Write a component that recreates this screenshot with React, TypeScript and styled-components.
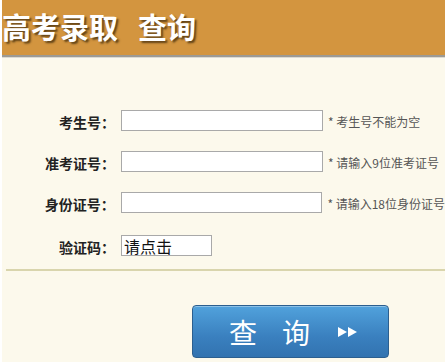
import React from "react";
import styled, { createGlobalStyle } from "styled-components";

const GlobalStyle = createGlobalStyle`
  html, body {
    margin: 0;
    padding: 0;
    background: #ffffff;
    overflow: hidden;
  }
  body {
    font-family: "Noto Sans CJK SC", "Noto Sans", sans-serif;
  }
`;

const Page = styled.div`
  margin-left: 2px;
  width: 443px;
  height: 362px;
  background: #fcf9ec;
  overflow: hidden;
`;

const Header = styled.header`
  height: 55px;
  background: #d3953f;
  border-bottom: 2px solid #9d9a93;
  box-shadow: 0 1px 0 #dcdad2;
  display: flex;
  align-items: center;
`;

const Title = styled.h1`
  margin: 0 0 3px 0;
  display: flex;
  gap: 20px;
  font-family: "Noto Sans CJK SC", sans-serif;
  font-size: 29px;
  font-weight: 700;
  line-height: 1;
  color: #ffffff;
  letter-spacing: 0;
  text-shadow: 2px 2px 2px rgba(60, 40, 10, 0.75);
`;

const Form = styled.form`
  padding-top: 53px;
  display: flex;
  flex-direction: column;
  gap: 20px;
`;

const Row = styled.div<{ $extra?: number }>`
  display: flex;
  align-items: center;
  height: 21px;
  margin-top: ${(p) => p.$extra ?? 0}px;
`;

const Label = styled.label`
  width: 113px;
  margin-right: 6px;
  margin-top: 3px;
  text-align: right;
  font-size: 14px;
  font-weight: 700;
  color: #222;
  white-space: nowrap;
  line-height: 1;
`;

const TextInput = styled.input<{ $w: number }>`
  box-sizing: border-box;
  width: ${(p) => p.$w}px;
  height: 21px;
  margin: 0;
  padding: 0 2px;
  border: 1px solid #a9a9a9;
  background: #ffffff;
  font-family: "Noto Sans CJK SC", sans-serif;
  font-size: 16px;
  line-height: 19px;
  color: #111;
  outline: none;
`;

const Hint = styled.span`
  margin-left: 5px;
  margin-top: 3px;
  font-size: 12px;
  line-height: 1;
  color: #555;
  white-space: nowrap;
`;

const Divider = styled.hr`
  margin: 13px 0 0 4px;
  border: none;
  height: 2px;
  background: #d9d5ad;
`;

const ButtonRow = styled.div`
  padding: 34px 0 0 190px;
`;

const SearchButton = styled.button`
  box-sizing: border-box;
  width: 197px;
  height: 53px;
  margin: 0;
  padding: 0 0 0 36px;
  display: flex;
  align-items: center;
  gap: 25px;
  border: 1px solid #2c5f8f;
  border-radius: 4px;
  background: linear-gradient(#51a2dc, #3a80bf 60%, #3273b0);
  box-shadow: inset 0 1px 0 rgba(255, 255, 255, 0.35);
  color: #ffffff;
  font-family: "Noto Sans CJK SC", sans-serif;
  font-size: 28px;
  font-weight: 400;
  line-height: 1;
  cursor: pointer;
`;

const Arrows = styled.svg`
  margin-left: 3px;
  display: block;
`;

const fields = [
  { label: "考生号：", hint: "* 考生号不能为空" },
  { label: "准考证号：", hint: "* 请输入9位准考证号" },
  { label: "身份证号：", hint: "* 请输入18位身份证号" },
];

export default function App() {
  return (
    <>
      <GlobalStyle />
      <Page>
        <Header>
          <Title>
            <span>高考录取</span>
            <span>查询</span>
          </Title>
        </Header>
        <Form onSubmit={(e) => e.preventDefault()}>
          {fields.map((f) => (
            <Row key={f.label}>
              <Label>{f.label}</Label>
              <TextInput $w={202} type="text" />
              <Hint>{f.hint}</Hint>
            </Row>
          ))}
          <Row $extra={2}>
            <Label>验证码：</Label>
            <TextInput $w={91} type="text" readOnly value="请点击" />
          </Row>
        </Form>
        <Divider />
        <ButtonRow>
          <SearchButton type="button">
            <span>查</span>
            <span>询</span>
            <Arrows width="20" height="10" viewBox="0 0 20 10">
              <polygon points="0,0 9,5 0,10" fill="#fff" />
              <polygon points="10,0 19,5 10,10" fill="#fff" />
            </Arrows>
          </SearchButton>
        </ButtonRow>
      </Page>
    </>
  );
}
